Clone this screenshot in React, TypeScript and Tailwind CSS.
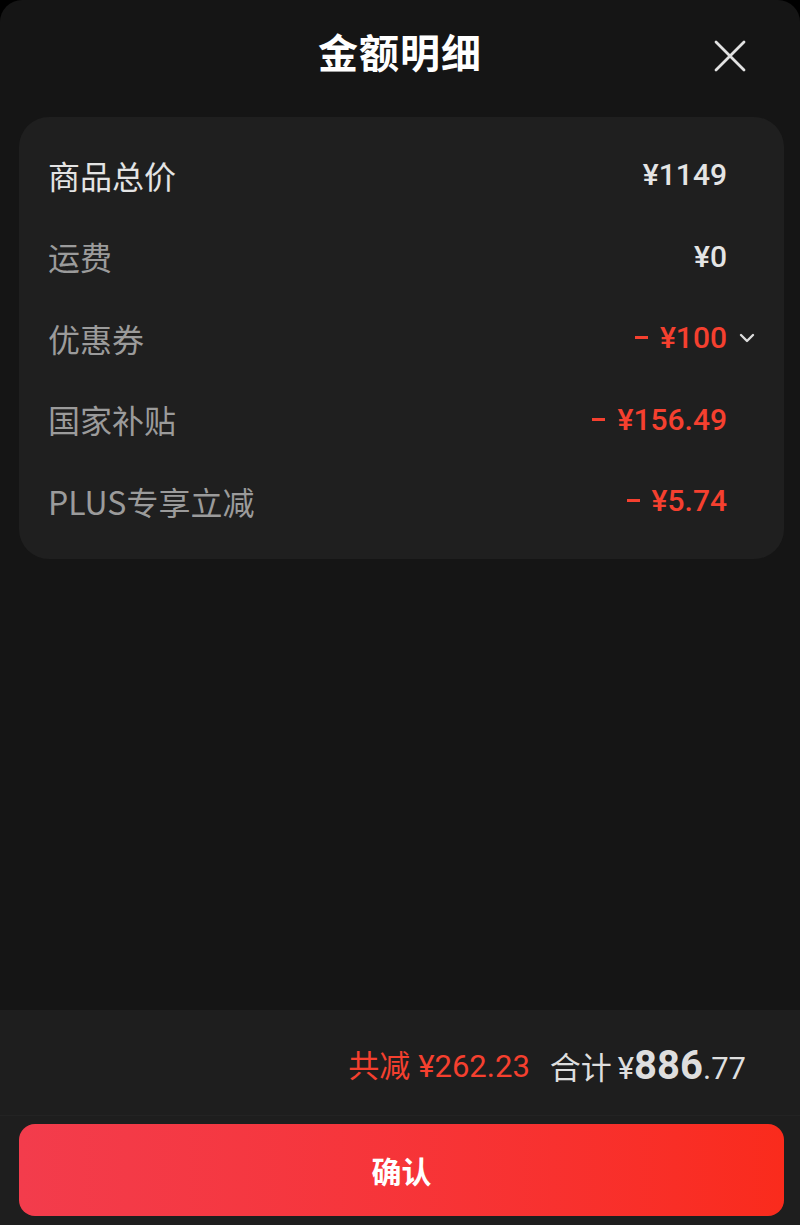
import React from 'react';

const font = { fontFamily: '"Noto Sans CJK SC", "Noto Sans", sans-serif' };
const num = { fontFamily: '"Roboto", "Noto Sans", sans-serif' };

type Row = { label: string; value: string; red?: boolean; bright?: boolean; chevron?: boolean };

const rows: Row[] = [
  { label: '商品总价', value: '¥1149', bright: true },
  { label: '运费', value: '¥0' },
  { label: '优惠券', value: '¥100', red: true, chevron: true },
  { label: '国家补贴', value: '¥156.49', red: true },
  { label: 'PLUS专享立减', value: '¥5.74', red: true },
];

export default function App() {
  return (
    <div className="w-[800px] h-[1225px] bg-black" style={font}>
      <div className="flex h-full flex-col rounded-t-[22px] bg-[#151515]">
        <div className="relative flex h-[110px] items-center justify-center pb-[8px]">
          <span className="text-[40px] font-bold tracking-[1px] text-white">金额明细</span>
          <button className="absolute right-[53px] top-[39px] text-[#e2e2e2]">
            <svg width="34" height="34" viewBox="0 0 34 34" fill="none" stroke="currentColor" strokeWidth="2.8" strokeLinecap="round">
              <path d="M3 3 L31 31 M31 3 L3 31" />
            </svg>
          </button>
        </div>

        <div className="ml-[19px] mr-[16px] mt-[7px] flex flex-col rounded-[30px] bg-[#1f1f1f] py-[17px]">
          {rows.map((r) => (
            <div key={r.label} className="relative flex h-[81.5px] items-center justify-between pl-[29px] pr-[57px]">
              <span className={`text-[32px] ${r.bright ? 'text-[#e4e4e4]' : 'text-[#9b9b9b]'}`}>{r.label}</span>
              <span className={`flex items-center text-[30px] font-medium ${r.red ? 'text-[#f5402f]' : 'text-[#e4e4e4]'}`} style={num}>
                {r.red && <span className="mr-[12px] inline-block h-[3px] w-[13px] bg-[#f5402f]" />}
                {r.value}
              </span>
              {r.chevron && (
                <svg className="absolute right-[28px] top-1/2 -translate-y-1/2 text-[#dcdcdc]" width="18" height="12" viewBox="0 0 18 12" fill="none" stroke="currentColor" strokeWidth="2.4" strokeLinecap="round" strokeLinejoin="round">
                  <path d="M3 3 L9 9 L15 3" />
                </svg>
              )}
            </div>
          ))}
        </div>

        <div className="flex-1" />

        <div className="flex h-[215px] flex-col bg-[#1e1e1e]">
          <div className="flex h-[106px] items-center justify-end gap-[20px] border-b border-[#232323] pr-[54px] pt-[6px]">
            <span className="flex items-baseline text-[31px] text-[#f5402f]">
              共减<span className="ml-[8px]" style={num}>¥262.23</span>
            </span>
            <span className="flex items-baseline text-[31px] text-[#dedede]">
              合计<span className="ml-[6px]" style={num}>¥</span>
              <span className="text-[40px] font-bold" style={num}>886</span>
              <span style={num}>.77</span>
            </span>
          </div>
          <div className="pl-[19px] pr-[16px] pt-[8px]">
            <button className="flex h-[92px] w-full items-center justify-center rounded-[16px] bg-gradient-to-r from-[#f33c4c] to-[#fa2b1c] text-[30px] font-bold text-white">
              确认
            </button>
          </div>
        </div>
      </div>
    </div>
  );
}
